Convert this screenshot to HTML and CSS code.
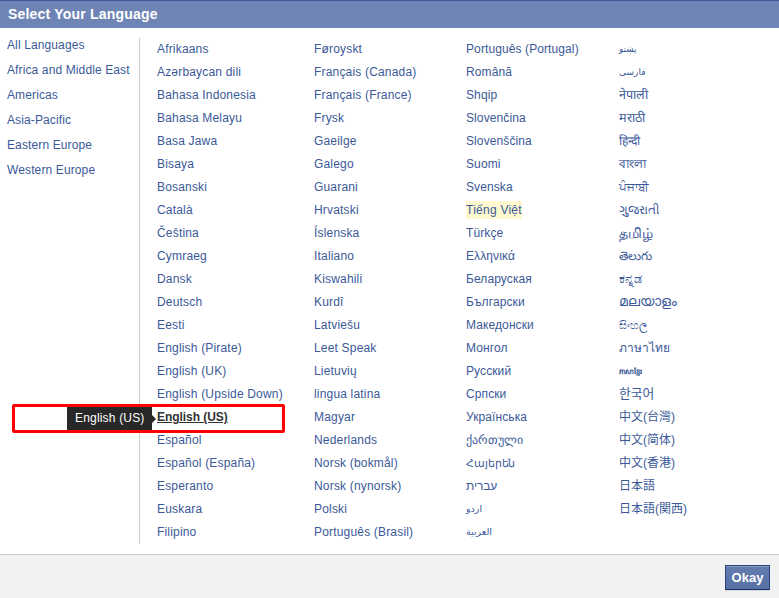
FILE: index.html
```html
<!DOCTYPE html>
<html lang="en">
<head>
<meta charset="utf-8">
<title>Select Your Language</title>
<link rel="stylesheet" href="styles.css">
</head>
<body>
<div class="dialog">
  <h1 class="dialog-title">Select Your Language</h1>
  <div class="dialog-body">
    <ul class="regions">
      <li><a>All Languages</a></li>
      <li><a>Africa and Middle East</a></li>
      <li><a>Americas</a></li>
      <li><a>Asia-Pacific</a></li>
      <li><a>Eastern Europe</a></li>
      <li><a>Western Europe</a></li>
    </ul>
    <div class="languages">
      <ul class="latin">
        <li><a>Afrikaans</a></li>
        <li><a>Azərbaycan dili</a></li>
        <li><a>Bahasa Indonesia</a></li>
        <li><a>Bahasa Melayu</a></li>
        <li><a>Basa Jawa</a></li>
        <li><a>Bisaya</a></li>
        <li><a>Bosanski</a></li>
        <li><a>Català</a></li>
        <li><a>Čeština</a></li>
        <li><a>Cymraeg</a></li>
        <li><a>Dansk</a></li>
        <li><a>Deutsch</a></li>
        <li><a>Eesti</a></li>
        <li><a>English (Pirate)</a></li>
        <li><a>English (UK)</a></li>
        <li><a>English (Upside Down)</a></li>
        <li class="current"><a>English (US)</a><span class="tooltip">English (US)</span><span class="marker"></span></li>
        <li><a>Español</a></li>
        <li><a>Español (España)</a></li>
        <li><a>Esperanto</a></li>
        <li><a>Euskara</a></li>
        <li><a>Filipino</a></li>
      </ul>
      <ul class="latin">
        <li><a>Føroyskt</a></li>
        <li><a>Français (Canada)</a></li>
        <li><a>Français (France)</a></li>
        <li><a>Frysk</a></li>
        <li><a>Gaeilge</a></li>
        <li><a>Galego</a></li>
        <li><a>Guarani</a></li>
        <li><a>Hrvatski</a></li>
        <li><a>Íslenska</a></li>
        <li><a>Italiano</a></li>
        <li><a>Kiswahili</a></li>
        <li><a>Kurdî</a></li>
        <li><a>Latviešu</a></li>
        <li><a>Leet Speak</a></li>
        <li><a>Lietuvių</a></li>
        <li><a>lingua latina</a></li>
        <li><a>Magyar</a></li>
        <li><a>Nederlands</a></li>
        <li><a>Norsk (bokmål)</a></li>
        <li><a>Norsk (nynorsk)</a></li>
        <li><a>Polski</a></li>
        <li><a>Português (Brasil)</a></li>
      </ul>
      <ul class="mixed">
        <li><a>Português (Portugal)</a></li>
        <li><a>Română</a></li>
        <li><a>Shqip</a></li>
        <li><a>Slovenčina</a></li>
        <li><a>Slovenščina</a></li>
        <li><a>Suomi</a></li>
        <li><a>Svenska</a></li>
        <li><a class="suggested">Tiếng Việt</a></li>
        <li><a>Türkçe</a></li>
        <li><a>Ελληνικά</a></li>
        <li><a>Беларуская</a></li>
        <li><a>Български</a></li>
        <li><a>Македонски</a></li>
        <li><a>Монгол</a></li>
        <li><a>Русский</a></li>
        <li><a>Српски</a></li>
        <li><a>Українська</a></li>
        <li><a class="georgian">ქართული</a></li>
        <li><a class="armenian">Հայերեն</a></li>
        <li><a class="hebrew">עברית</a></li>
        <li><a class="arabic">اردو</a></li>
        <li><a class="arabic">العربية</a></li>
      </ul>
      <ul>
        <li><a class="arabic pashto">پښتو</a></li>
        <li><a class="arabic persian">فارسی</a></li>
        <li><a class="devanagari">नेपाली</a></li>
        <li><a class="devanagari">मराठी</a></li>
        <li><a>हिन्दी</a></li>
        <li><a class="bengali">বাংলা</a></li>
        <li><a>ਪੰਜਾਬੀ</a></li>
        <li><a class="gujarati">ગુજરાતી</a></li>
        <li><a class="tamil">தமிழ்</a></li>
        <li><a>తెలుగు</a></li>
        <li><a class="kannada">ಕನ್ನಡ</a></li>
        <li><a class="malayalam">മലയാളം</a></li>
        <li><a class="sinhala">සිංහල</a></li>
        <li><a>ภาษาไทย</a></li>
        <li><a class="khmer">ភាសាខ្មែរ</a></li>
        <li><a lang="ko">한국어</a></li>
        <li><a lang="zh-Hant">中文(台灣)</a></li>
        <li><a lang="zh-Hans">中文(简体)</a></li>
        <li><a lang="zh-Hant">中文(香港)</a></li>
        <li><a lang="ja">日本語</a></li>
        <li><a lang="ja">日本語(関西)</a></li>
      </ul>
    </div>
  </div>
  <div class="dialog-footer"><button class="okay">Okay</button></div>
</div>
</body>
</html>
```
FILE: styles.css
```css
* { box-sizing: border-box; }

body {
  margin: 0;
  font: 12px/15px "Liberation Sans", Arial, sans-serif;
  color: #3b5998;
  background: #fff;
}

ul { margin: 0; padding: 0; list-style: none; }

.dialog {
  display: flex;
  flex-direction: column;
  height: 598px;
  overflow: hidden;
}

.dialog-title {
  flex: none;
  height: 28px;
  margin: 0;
  padding: 0 8px;
  border-top: 1px solid #3b5998;
  background: #6d84b4;
  color: #fff;
  font-size: 14px;
  line-height: 27px;
  letter-spacing: 0.2px;
}

.dialog-body { flex: 1; display: flex; }

.regions {
  width: 140px;
  height: 506px;
  margin-top: 10px;
  padding-left: 7px;
  border-right: 1px solid #ccc;
}
.regions li { height: 25px; white-space: nowrap; letter-spacing: 0.12px; }

.languages {
  display: grid;
  grid-template-columns: 157px 152px 153px 160px;
  align-content: start;
  padding: 10px 0 0 17px;
}
.languages li {
  position: relative;
  display: flex;
  align-items: flex-start;
  height: 23px;
  line-height: 22px;
  white-space: nowrap;
}
.latin { letter-spacing: 0.18px; }
.mixed { letter-spacing: 0.1px; }

.suggested { height: 18px; margin-top: 2px; line-height: 18px; letter-spacing: 0.25px; background: #fff9d0; }

.languages .arabic { font-family: "DejaVu Sans", sans-serif; font-size: 9.5px; letter-spacing: 0; }
.languages .pashto { font-size: 8.8px; }
.languages .persian { font-size: 9px; }
.georgian { font-size: 11.5px; letter-spacing: 0; }
.armenian { font-size: 11px; letter-spacing: -0.1px; }
.hebrew { letter-spacing: -0.1px; }
.devanagari { font-size: 12.6px; }
.bengali { font-size: 11.5px; -webkit-text-stroke: 0.2px; }
.gujarati { font-size: 12.4px; }
.tamil { font-size: 14px; -webkit-text-stroke: 0.2px; }
.kannada { font-size: 13px; }
.malayalam { font-size: 13.8px; }
.sinhala { font-size: 11.3px; }
.languages .khmer { padding-top: 1px; font-size: 7px; -webkit-text-stroke: 0.3px; }
:lang(ko) { font-family: "Liberation Sans", "Noto Sans CJK KR", sans-serif; font-size: 12.8px; }
:lang(zh-Hant) { font-family: "Liberation Sans", "Noto Sans CJK TC", sans-serif; }
:lang(zh-Hans) { font-family: "Liberation Sans", "Noto Sans CJK SC", sans-serif; }
:lang(ja) { font-family: "Liberation Sans", "Noto Sans CJK JP", sans-serif; }

.current a { font-weight: bold; color: #333; letter-spacing: -0.05px; text-decoration: underline; }

.tooltip {
  position: absolute;
  top: 1px;
  left: -90px;
  width: 85px;
  height: 23px;
  padding-left: 8px;
  background: #282828;
  color: #fff;
  line-height: 22px;
}
.tooltip::after {
  content: "";
  position: absolute;
  top: 8px;
  left: 85px;
  border: solid transparent;
  border-width: 4px 0 4px 4px;
  border-left-color: #282828;
}
.marker {
  position: absolute;
  top: -2px;
  left: -145px;
  width: 273px;
  height: 29px;
  border: 3px solid #f00;
  border-radius: 2px;
}

.dialog-footer {
  flex: none;
  display: flex;
  justify-content: flex-end;
  align-items: flex-start;
  height: 44px;
  padding: 10px 9px 0;
  border-top: 1px solid #ccc;
  background: #f2f2f2;
}
.okay {
  width: 45px;
  height: 25px;
  padding: 0;
  border: 1px solid #29447e;
  border-bottom-color: #1a356e;
  background: linear-gradient(#637bad, #5872a7);
  box-shadow: inset 0 1px 0 #8a9cc2, 0 1px 0 rgba(0, 0, 0, 0.1);
  color: #fff;
  font: bold 13px/22px "Liberation Sans", Arial, sans-serif;
}
```
